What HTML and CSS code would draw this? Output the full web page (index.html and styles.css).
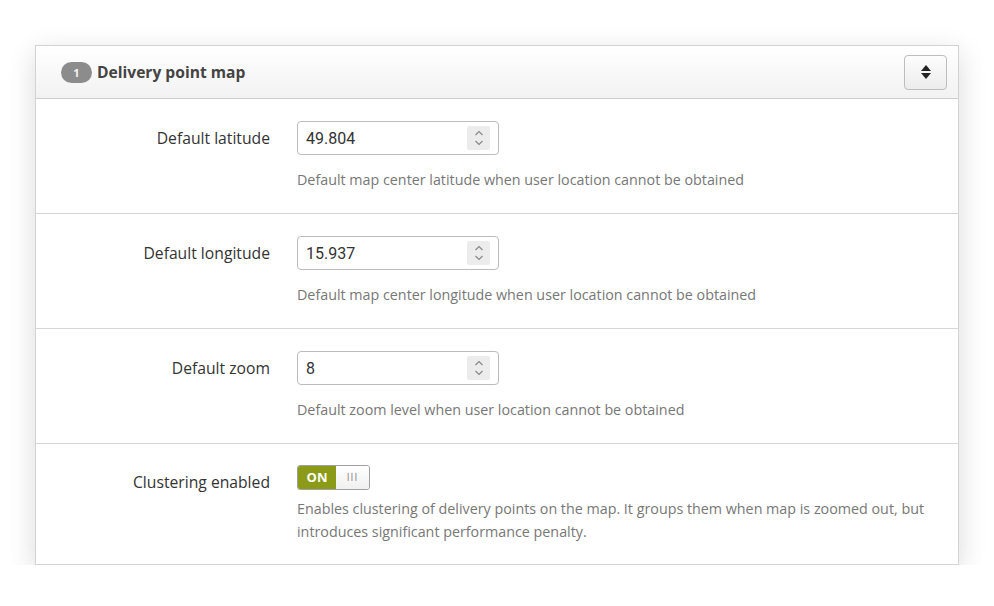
FILE: index.html
```html
<!DOCTYPE html>
<html lang="en">
<head>
  <meta charset="UTF-8">
  <title>Delivery point map</title>
  <link rel="stylesheet" href="styles.css">
</head>
<body>
  <div class="panel">
    <div class="panel-heading">
      <span class="badge">1</span>
      <span class="panel-title">Delivery point map</span>
      <button class="btn-toggle" type="button">
        <svg width="12" height="16" viewBox="0 0 12 16">
          <path d="M6 1 L11 7 H1 Z" fill="#222"/>
          <path d="M6 15 L11 9 H1 Z" fill="#222"/>
        </svg>
      </button>
    </div>

    <div class="form-row">
      <label class="form-label">Default latitude</label>
      <div class="form-field">
        <div class="num-input">
          <span class="num-value">49.804</span>
          <span class="spinner">
            <svg width="10" height="18" viewBox="0 0 10 18">
              <path d="M1.5 6 L5 2.5 L8.5 6" fill="none" stroke="#888" stroke-width="1.2"/>
              <path d="M1.5 12 L5 15.5 L8.5 12" fill="none" stroke="#888" stroke-width="1.2"/>
            </svg>
          </span>
        </div>
        <p class="help">Default map center latitude when user location cannot be obtained</p>
      </div>
    </div>

    <div class="form-row">
      <label class="form-label">Default longitude</label>
      <div class="form-field">
        <div class="num-input">
          <span class="num-value">15.937</span>
          <span class="spinner">
            <svg width="10" height="18" viewBox="0 0 10 18">
              <path d="M1.5 6 L5 2.5 L8.5 6" fill="none" stroke="#888" stroke-width="1.2"/>
              <path d="M1.5 12 L5 15.5 L8.5 12" fill="none" stroke="#888" stroke-width="1.2"/>
            </svg>
          </span>
        </div>
        <p class="help">Default map center longitude when user location cannot be obtained</p>
      </div>
    </div>

    <div class="form-row">
      <label class="form-label">Default zoom</label>
      <div class="form-field">
        <div class="num-input">
          <span class="num-value">8</span>
          <span class="spinner">
            <svg width="10" height="18" viewBox="0 0 10 18">
              <path d="M1.5 6 L5 2.5 L8.5 6" fill="none" stroke="#888" stroke-width="1.2"/>
              <path d="M1.5 12 L5 15.5 L8.5 12" fill="none" stroke="#888" stroke-width="1.2"/>
            </svg>
          </span>
        </div>
        <p class="help">Default zoom level when user location cannot be obtained</p>
      </div>
    </div>

    <div class="form-row form-row-last">
      <label class="form-label label-switch">Clustering enabled</label>
      <div class="form-field">
        <div class="switch">
          <span class="switch-on">ON</span>
          <span class="switch-handle">III</span>
        </div>
        <p class="help help-switch">Enables clustering of delivery points on the map. It groups them when map is zoomed out, but introduces significant performance penalty.</p>
      </div>
    </div>
  </div>
</body>
</html>
```

FILE: styles.css
```css
body {
  margin: 0;
  background: #fff;
  font-family: "Open Sans", sans-serif;
  color: #333;
}

.panel {
  margin: 45px 0 0 35px;
  width: 922px;
  border: 1px solid #d3d3d3;
  background: #fff;
  box-shadow: 0 8px 26px rgba(0, 0, 0, 0.15);
}

.panel-heading {
  height: 52px;
  display: flex;
  align-items: center;
  padding: 0 11px 0 25px;
  background: linear-gradient(#ffffff, #f2f2f2);
  border-bottom: 1px solid #cfcfcf;
}

.badge {
  display: inline-block;
  width: 31px;
  height: 21px;
  line-height: 21px;
  border-radius: 11px;
  background: #8c8c8c;
  color: #f4f4f4;
  font-size: 11px;
  font-weight: bold;
  text-align: center;
}

.panel-title {
  margin-left: 5px;
  font-size: 15.6px;
  font-weight: bold;
  color: #444;
  flex: 1;
}

.btn-toggle {
  width: 43px;
  height: 35px;
  border: 1px solid #bdbdbd;
  border-radius: 4px;
  background: linear-gradient(#fdfdfd, #ececec);
  display: flex;
  align-items: center;
  justify-content: center;
  padding: 0;
}

.form-row {
  display: flex;
  padding: 22px 0 23px;
  border-bottom: 1px solid #d6d6d6;
}

.form-row-last {
  border-bottom: none;
  padding: 21px 0 21px;
}

.form-label {
  width: 234px;
  text-align: right;
  font-size: 15.7px;
  line-height: 34px;
  color: #333;
}

.label-switch {
  line-height: 25px;
  padding-top: 5px;
}

.form-field {
  margin-left: 27px;
  flex: 1;
  padding-right: 20px;
}

.num-input {
  height: 32px;
  border: 1px solid #bcbcbc;
  border-radius: 4px;
  display: flex;
  align-items: center;
  justify-content: space-between;
  padding: 0 8px 0 8px;
  box-sizing: content-box;
  width: 184px;
}

.num-value {
  font-family: Roboto, sans-serif;
  font-size: 16px;
  color: #333;
}

.spinner {
  width: 23px;
  height: 24px;
  background: #ececec;
  border-radius: 2px;
  display: flex;
  align-items: center;
  justify-content: center;
}

.help {
  margin: 15px 0 0;
  font-size: 14.3px;
  line-height: 20px;
  color: #777;
}

.help-switch {
  margin-top: 7px;
  line-height: 23px;
}

.switch {
  display: flex;
  width: 73px;
  height: 25px;
  border-radius: 3px;
  overflow: hidden;
  border: 1px solid #a0a0a0;
  box-sizing: border-box;
}

.switch-on {
  width: 38px;
  background: #8b9a17;
  color: #fff;
  font-size: 13px;
  font-weight: bold;
  text-align: center;
  line-height: 23px;
}

.switch-handle {
  flex: 1;
  background: linear-gradient(#ffffff, #f0f0f0);
  color: #888;
  font-size: 10px;
  text-align: center;
  line-height: 23px;
  letter-spacing: 1px;
}
```
